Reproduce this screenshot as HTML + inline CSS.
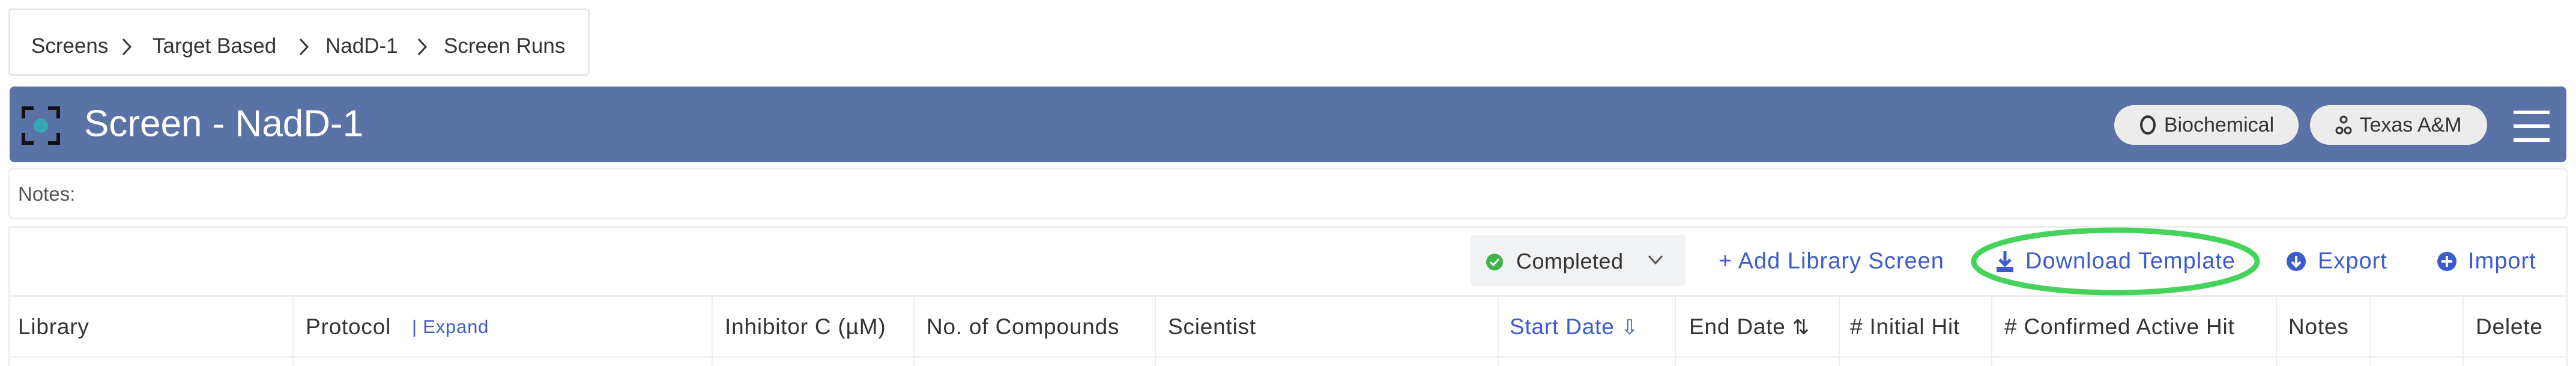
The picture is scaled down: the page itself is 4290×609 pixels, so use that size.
<!DOCTYPE html>
<html><head><meta charset="utf-8"><style>
*{box-sizing:border-box;margin:0;padding:0}
body{width:4290px;height:609px;background:#fff;font-family:"Liberation Sans",sans-serif;position:relative;overflow:hidden;color:#333}
.a{position:absolute;white-space:nowrap}
.bc{left:14px;top:14px;width:968px;height:112px;border:3px solid #e6e6e6;border-radius:6px;background:#fff}
.bct{top:77px;transform:translateY(-50%);font-size:35px;color:#333}
.bar{left:16px;top:144px;width:4258px;height:126px;background:#5a72a6;border-radius:8px}
.pill{top:175px;height:66px;background:#ececec;border-radius:33px;font-size:34px;color:#333;display:flex;align-items:center;justify-content:center;gap:12px}
.box{border:3px solid #eeeeee;border-radius:8px}
.hd{top:544px;transform:translateY(-50%);font-size:37px;letter-spacing:0.8px;color:#333}
.vl{position:absolute;top:492px;width:2px;height:117px;background:#eeeeee}
.tb{top:435px;transform:translateY(-50%);font-size:38px;letter-spacing:1px;color:#3d5ccc}
</style></head><body>
<div class="a bc"></div>
<div class="a bct" style="left:52px">Screens</div>
<svg class="a" style="left:202px;top:62px" width="18" height="32" viewBox="0 0 18 32"><path d="M3 3l12 13-12 13" fill="none" stroke="#333" stroke-width="3"/></svg>
<div class="a bct" style="left:254px">Target Based</div>
<svg class="a" style="left:497px;top:62px" width="18" height="32" viewBox="0 0 18 32"><path d="M3 3l12 13-12 13" fill="none" stroke="#333" stroke-width="3"/></svg>
<div class="a bct" style="left:542px">NadD-1</div>
<svg class="a" style="left:694px;top:62px" width="18" height="32" viewBox="0 0 18 32"><path d="M3 3l12 13-12 13" fill="none" stroke="#333" stroke-width="3"/></svg>
<div class="a bct" style="left:739px">Screen Runs</div>

<div class="a bar"></div>
<svg class="a" style="left:36px;top:177px" width="64" height="64" viewBox="0 0 64 64"><path d="M3 20V3H20M44 3H61V20M61 44V61H44M20 61H3V44" fill="none" stroke="#111" stroke-width="6"/><circle cx="32" cy="32" r="12" fill="#36a8b4"/></svg>
<div class="a" style="left:140px;top:206px;transform:translateY(-50%);font-size:62px;color:#fff">Screen - NadD-1</div>
<div class="a pill" style="left:3521px;width:307px"><svg width="30" height="34" viewBox="0 0 30 34"><ellipse cx="15" cy="17" rx="11" ry="14" fill="none" stroke="#333" stroke-width="4"/></svg>Biochemical</div>
<div class="a pill" style="left:3847px;width:295px"><svg width="28" height="34" viewBox="0 0 28 34"><circle cx="14" cy="8" r="5" fill="none" stroke="#333" stroke-width="3"/><circle cx="7" cy="26" r="5" fill="none" stroke="#333" stroke-width="3"/><circle cx="21" cy="26" r="5" fill="none" stroke="#333" stroke-width="3"/></svg>Texas A&amp;M</div>
<svg class="a" style="left:4186px;top:180px" width="60" height="60" viewBox="0 0 60 60"><rect x="0" y="4" width="60" height="6" fill="#fff"/><rect x="0" y="27" width="60" height="6" fill="#fff"/><rect x="0" y="50" width="60" height="6" fill="#fff"/></svg>

<div class="a box" style="left:14px;top:279px;width:4262px;height:86px"></div>
<div class="a" style="left:30px;top:323px;transform:translateY(-50%);font-size:33px;color:#555">Notes:</div>

<div class="a" style="left:14px;top:376px;width:4262px;height:233px;border:3px solid #eeeeee;border-bottom:none"></div>
<div class="a" style="left:14px;top:491px;width:4262px;height:3px;background:#eeeeee"></div>
<div class="a" style="left:14px;top:592px;width:4262px;height:3px;background:#eeeeee"></div>

<div class="a" style="left:2449px;top:391px;width:358px;height:85px;background:#f1f2f4;border-radius:6px"></div>
<svg class="a" style="left:2474px;top:421px" width="30" height="30" viewBox="0 0 30 30"><circle cx="15" cy="15" r="14" fill="#3cb54a"/><path d="M8 15l5 5 9-10" fill="none" stroke="#fff" stroke-width="3"/></svg>
<div class="a" style="left:2525px;top:435px;transform:translateY(-50%);font-size:36px;letter-spacing:0.5px;color:#333">Completed</div>
<svg class="a" style="left:2744px;top:423px" width="26" height="18" viewBox="0 0 26 18"><path d="M2 3l11 12 11-12" fill="none" stroke="#555" stroke-width="3"/></svg>

<div class="a tb" style="left:2862px">+ Add Library Screen</div>
<svg class="a" style="left:3322px;top:416px" width="34" height="40" viewBox="0 0 34 40"><path d="M17 2v22M8 16l9 9 9-9" fill="none" stroke="#3d5ccc" stroke-width="5"/><path d="M3 28v9h28v-9" fill="#3d5ccc"/></svg>
<div class="a tb" style="left:3373px">Download Template</div>
<svg class="a" style="left:3807px;top:418px" width="34" height="34" viewBox="0 0 34 34"><circle cx="17" cy="17" r="16" fill="#3d5ccc"/><path d="M17 8v16M10 18l7 7 7-7" fill="none" stroke="#fff" stroke-width="4"/></svg>
<div class="a tb" style="left:3860px">Export</div>
<svg class="a" style="left:4058px;top:418px" width="34" height="34" viewBox="0 0 34 34"><circle cx="17" cy="17" r="16" fill="#3d5ccc"/><path d="M17 8v18M8 17h18" fill="none" stroke="#fff" stroke-width="4"/></svg>
<div class="a tb" style="left:4110px">Import</div>
<svg class="a" style="left:3280px;top:376px" width="486" height="118" viewBox="0 0 486 118"><ellipse cx="243" cy="59" rx="236" ry="52" fill="none" stroke="#46d35b" stroke-width="9"/></svg>

<div class="vl" style="left:487px"></div><div class="vl" style="left:1185px"></div><div class="vl" style="left:1521px"></div><div class="vl" style="left:1923px"></div><div class="vl" style="left:2494px"></div><div class="vl" style="left:2789px"></div><div class="vl" style="left:3062px"></div><div class="vl" style="left:3316px"></div><div class="vl" style="left:3790px"></div><div class="vl" style="left:3946px"></div><div class="vl" style="left:4101px"></div>

<div class="a hd" style="left:30px">Library</div>
<div class="a hd" style="left:509px">Protocol</div>
<div class="a hd" style="left:686px;font-size:31px;color:#3d5ccc">| Expand</div>
<div class="a hd" style="left:1207px">Inhibitor C (µM)</div>
<div class="a hd" style="left:1543px">No. of Compounds</div>
<div class="a hd" style="left:1945px">Scientist</div>
<div class="a hd" style="left:2514px;color:#3d5ccc">Start Date <span style="font-size:34px">&#x21E9;</span></div>
<div class="a hd" style="left:2813px">End Date <span style="font-size:34px">&#x21C5;</span></div>
<div class="a hd" style="left:3081px"># Initial Hit</div>
<div class="a hd" style="left:3338px"># Confirmed Active Hit</div>
<div class="a hd" style="left:3811px">Notes</div>
<div class="a hd" style="left:4123px">Delete</div>
</body></html>
